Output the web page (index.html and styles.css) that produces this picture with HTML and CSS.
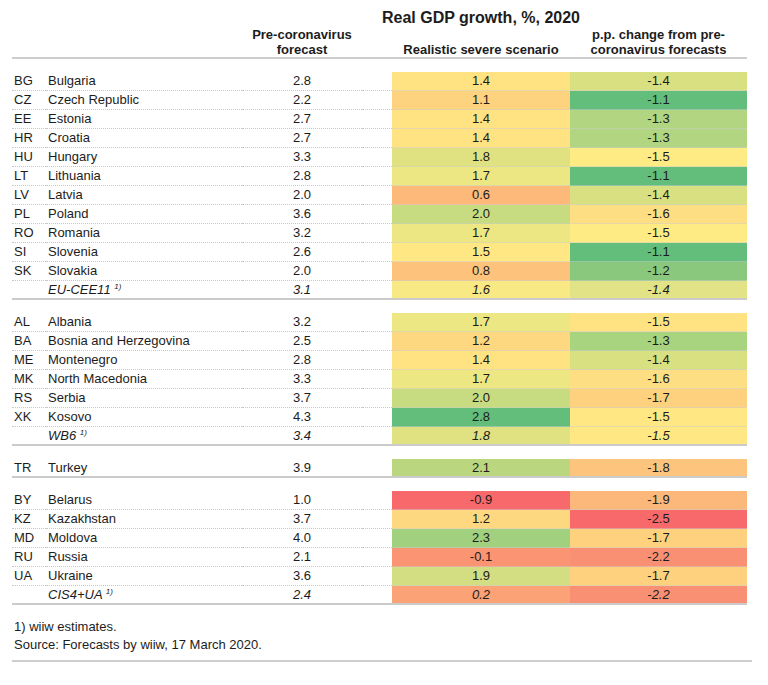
FILE: index.html
```html
<!DOCTYPE html>
<html lang="en">
<head>
<meta charset="utf-8">
<title>Real GDP growth, %, 2020</title>
<link rel="stylesheet" href="styles.css">
</head>
<body>
<div class="page">
  <div class="head">
    <div class="title">Real GDP growth, %, 2020</div>
    <div class="h-pre">Pre-coronavirus<br>forecast</div>
    <div class="h-v1">Realistic severe scenario</div>
    <div class="h-v2">p.p. change from pre-<br>coronavirus forecasts</div>
  </div>

  <div class="group">
    <div class="row"><span class="code">BG</span><span class="name">Bulgaria</span><span class="pre">2.8</span><span class="gap"></span><span class="v" style="background:#FFE383">1.4</span><span class="v" style="background:#D8E082">-1.4</span></div>
    <div class="row"><span class="code">CZ</span><span class="name">Czech Republic</span><span class="pre">2.2</span><span class="gap"></span><span class="v" style="background:#FED37F">1.1</span><span class="v" style="background:#63BE7B">-1.1</span></div>
    <div class="row"><span class="code">EE</span><span class="name">Estonia</span><span class="pre">2.7</span><span class="gap"></span><span class="v" style="background:#FFE383">1.4</span><span class="v" style="background:#B1D580">-1.3</span></div>
    <div class="row"><span class="code">HR</span><span class="name">Croatia</span><span class="pre">2.7</span><span class="gap"></span><span class="v" style="background:#FFE383">1.4</span><span class="v" style="background:#B1D580">-1.3</span></div>
    <div class="row"><span class="code">HU</span><span class="name">Hungary</span><span class="pre">3.3</span><span class="gap"></span><span class="v" style="background:#E0E282">1.8</span><span class="v" style="background:#FFEB84">-1.5</span></div>
    <div class="row"><span class="code">LT</span><span class="name">Lithuania</span><span class="pre">2.8</span><span class="gap"></span><span class="v" style="background:#ECE683">1.7</span><span class="v" style="background:#63BE7B">-1.1</span></div>
    <div class="row"><span class="code">LV</span><span class="name">Latvia</span><span class="pre">2.0</span><span class="gap"></span><span class="v" style="background:#FCB97A">0.6</span><span class="v" style="background:#D8E082">-1.4</span></div>
    <div class="row"><span class="code">PL</span><span class="name">Poland</span><span class="pre">3.6</span><span class="gap"></span><span class="v" style="background:#C7DB81">2.0</span><span class="v" style="background:#FEDE82">-1.6</span></div>
    <div class="row"><span class="code">RO</span><span class="name">Romania</span><span class="pre">3.2</span><span class="gap"></span><span class="v" style="background:#ECE683">1.7</span><span class="v" style="background:#FFEB84">-1.5</span></div>
    <div class="row"><span class="code">SI</span><span class="name">Slovenia</span><span class="pre">2.6</span><span class="gap"></span><span class="v" style="background:#FFE883">1.5</span><span class="v" style="background:#63BE7B">-1.1</span></div>
    <div class="row"><span class="code">SK</span><span class="name">Slovakia</span><span class="pre">2.0</span><span class="gap"></span><span class="v" style="background:#FDC37C">0.8</span><span class="v" style="background:#8AC97D">-1.2</span></div>
    <div class="row agg"><span class="code"></span><span class="name">EU-CEE11 <sup class="fn">1)</sup></span><span class="pre">3.1</span><span class="gap"></span><span class="v" style="background:#F9E984">1.6</span><span class="v" style="background:#E2E386">-1.4</span></div>
  </div>

  <div class="group">
    <div class="row"><span class="code">AL</span><span class="name">Albania</span><span class="pre">3.2</span><span class="gap"></span><span class="v" style="background:#ECE683">1.7</span><span class="v" style="background:#FFE383">-1.5</span></div>
    <div class="row"><span class="code">BA</span><span class="name">Bosnia and Herzegovina</span><span class="pre">2.5</span><span class="gap"></span><span class="v" style="background:#FED880">1.2</span><span class="v" style="background:#A8D37F">-1.3</span></div>
    <div class="row"><span class="code">ME</span><span class="name">Montenegro</span><span class="pre">2.8</span><span class="gap"></span><span class="v" style="background:#FFE383">1.4</span><span class="v" style="background:#D8E082">-1.4</span></div>
    <div class="row"><span class="code">MK</span><span class="name">North Macedonia</span><span class="pre">3.3</span><span class="gap"></span><span class="v" style="background:#ECE683">1.7</span><span class="v" style="background:#FEDE82">-1.6</span></div>
    <div class="row"><span class="code">RS</span><span class="name">Serbia</span><span class="pre">3.7</span><span class="gap"></span><span class="v" style="background:#C7DB81">2.0</span><span class="v" style="background:#FED17F">-1.7</span></div>
    <div class="row"><span class="code">XK</span><span class="name">Kosovo</span><span class="pre">4.3</span><span class="gap"></span><span class="v" style="background:#63BE7B">2.8</span><span class="v" style="background:#FFE883">-1.5</span></div>
    <div class="row agg"><span class="code"></span><span class="name">WB6 <sup class="fn">1)</sup></span><span class="pre">3.4</span><span class="gap"></span><span class="v" style="background:#E0E282">1.8</span><span class="v" style="background:#FFE883">-1.5</span></div>
  </div>

  <div class="group">
    <div class="row single"><span class="code">TR</span><span class="name">Turkey</span><span class="pre">3.9</span><span class="gap"></span><span class="v" style="background:#BAD780">2.1</span><span class="v" style="background:#FDC47D">-1.8</span></div>
  </div>

  <div class="group">
    <div class="row"><span class="code">BY</span><span class="name">Belarus</span><span class="pre">1.0</span><span class="gap"></span><span class="v" style="background:#F8696B">-0.9</span><span class="v" style="background:#FCB77A">-1.9</span></div>
    <div class="row"><span class="code">KZ</span><span class="name">Kazakhstan</span><span class="pre">3.7</span><span class="gap"></span><span class="v" style="background:#FED880">1.2</span><span class="v" style="background:#F8696B">-2.5</span></div>
    <div class="row"><span class="code">MD</span><span class="name">Moldova</span><span class="pre">4.0</span><span class="gap"></span><span class="v" style="background:#A1D07F">2.3</span><span class="v" style="background:#FED17F">-1.7</span></div>
    <div class="row"><span class="code">RU</span><span class="name">Russia</span><span class="pre">2.1</span><span class="gap"></span><span class="v" style="background:#FA9473">-0.1</span><span class="v" style="background:#FA9073">-2.2</span></div>
    <div class="row"><span class="code">UA</span><span class="name">Ukraine</span><span class="pre">3.6</span><span class="gap"></span><span class="v" style="background:#D3DE82">1.9</span><span class="v" style="background:#FED17F">-1.7</span></div>
    <div class="row agg"><span class="code"></span><span class="name">CIS4+UA <sup class="fn">1)</sup></span><span class="pre">2.4</span><span class="gap"></span><span class="v" style="background:#FBA376">0.2</span><span class="v" style="background:#FA9073">-2.2</span></div>
  </div>

  <div class="foot">
    <p>1) wiiw estimates.</p>
    <p>Source: Forecasts by wiiw, 17 March 2020.</p>
  </div>
</div>
</body>
</html>
```

FILE: styles.css
```css
* { box-sizing: border-box; }

html, body {
  margin: 0;
  padding: 0;
  background: #ffffff;
}

body {
  font-family: "Liberation Sans", Arial, sans-serif;
  font-size: 13px;
  color: #1c1c1c;
}

.page {
  padding: 9px 0 0 12px;
  width: 768px;
}

.head {
  display: grid;
  grid-template-columns: 34px 196px 120px 30px 178px 177px;
  grid-template-rows: 18px 30px;
  width: 735px;
  border-bottom: 2px solid #cdcdcd;
  font-weight: bold;
  line-height: 15px;
}

.title {
  grid-column: 5;
  grid-row: 1;
  display: flex;
  justify-content: center;
  white-space: nowrap;
  font-size: 16px;
  line-height: 18px;
}

.h-pre {
  grid-column: 3;
  grid-row: 2;
  text-align: center;
}

.h-v1 {
  grid-column: 5;
  grid-row: 2;
  align-self: end;
  text-align: center;
  white-space: nowrap;
}

.h-v2 {
  grid-column: 6;
  grid-row: 2;
  text-align: center;
  white-space: nowrap;
}

.group {
  width: 735px;
  margin-top: 13px;
}

.group:first-of-type { margin-top: 11px; }

.row {
  display: grid;
  grid-template-columns: 34px 196px 120px 30px 178px 177px;
  height: 19px;
}

.row > span {
  display: block;
  height: 19px;
  line-height: 18px;
  border-bottom: 1px dotted #c8c8c8;
  white-space: nowrap;
}

.code { padding-left: 2px; }
.name { padding-left: 2px; }
.pre { text-align: center; }

.row > .v {
  text-align: center;
  border-bottom: 1px solid rgba(205, 205, 205, 0.5);
}

.row.agg > span,
.row.single > span {
  line-height: 17px;
  border-bottom: 2px solid #cbcbcb;
}

.row.agg > .name,
.row.agg > .pre,
.row.agg > .v {
  font-style: italic;
}

.fn {
  font-size: 8px;
  line-height: 0;
  vertical-align: 5px;
}

.foot {
  width: 740px;
  margin-top: 13px;
  padding: 0 0 6px 2px;
  border-bottom: 2px solid #cdcdcd;
}

.foot p {
  margin: 0;
  line-height: 18px;
}
```
